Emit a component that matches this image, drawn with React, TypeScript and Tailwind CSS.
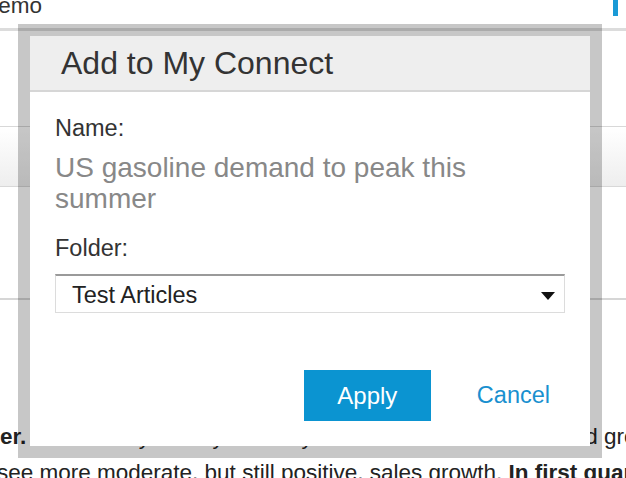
import { useState } from "react"

const folders = ["Test Articles", "Energy", "Markets", "Saved Reports"]

function Caret() {
  return (
    <svg width="14" height="8" viewBox="0 0 14 8" className="shrink-0">
      <path d="M0 0h14L7 8z" fill="#111" />
    </svg>
  )
}

function BackgroundPage() {
  return (
    <div className="flex flex-col text-[22.5px] text-[#222]">
      {/* top bar */}
      <div className="flex h-[28px] items-start justify-between">
        <span className="-ml-[18px] -mt-[8px] leading-[27px] text-[#333]">Demo</span>
        <div className="mr-[8px] h-[16px] w-[5px] bg-[#1a9ad6]" />
      </div>
      <div className="h-[3px] bg-[#dcdcdc]" />
      <div className="h-[95px]" />
      {/* toolbar band */}
      <div className="h-[61px] border-y border-[#d8d8d8] bg-gradient-to-b from-white to-[#eeeeee]" />
      <div className="h-[111px]" />
      <div className="h-[2px] bg-[#d6d6d6]" />
      <div className="h-[119px]" />
      <div className="whitespace-nowrap leading-[36px]">
        <p>
          <b>er.</b> Traders say that by mid July total demand will flatten and gro
        </p>
        <p className="-ml-[3px]">
          see more moderate, but still positive, sales growth. <b>In first quarter</b>
        </p>
      </div>
    </div>
  )
}

export default function App() {
  const [folder, setFolder] = useState(folders[0])

  return (
    <div className="relative h-[478px] w-[626px] overflow-hidden bg-white font-['Liberation_Sans',Arial,sans-serif]">
      <BackgroundPage />

      {/* Add to My Connect dialog */}
      <div className="absolute left-[18px] top-[24px] w-[584px] bg-black/[0.22] p-[12px]">
        <div className="flex flex-col bg-white">
          <div className="flex h-[56px] items-center border-b-2 border-[#d6d6d6] bg-[#eeeeee] pl-[31px]">
            <h2 className="text-[32px] leading-none text-[#333]">Add to My Connect</h2>
          </div>

          <div className="flex flex-col px-[25px] pb-[25px] pt-[22px]">
            <div className="text-[23.5px] leading-[28px] text-[#333]">Name:</div>
            <div className="mt-[10px] text-[28px] leading-[31px] text-[#888]">
              US gasoline demand to peak this summer
            </div>

            <div className="mt-[20px] text-[23.5px] leading-[28px] text-[#333]">Folder:</div>
            <div className="relative mt-[12px] flex h-[39px] items-center border border-t-2 border-[#dcdcdc] border-t-[#9a9a9a] pl-[16px] pr-[9px] pt-[4px]">
              <select
                value={folder}
                onChange={(e) => setFolder(e.target.value)}
                className="absolute inset-0 opacity-0"
              >
                {folders.map((f) => (
                  <option key={f}>{f}</option>
                ))}
              </select>
              <span className="flex-1 text-[23.5px] text-[#222]">{folder}</span>
              <Caret />
            </div>

            <div className="mt-[57px] flex items-center justify-end">
              <button className="h-[51px] w-[127px] bg-[#0b94d1] text-[24px] text-white">Apply</button>
              <button className="ml-[31px] px-[15px] text-[23.5px] text-[#1990cf]">Cancel</button>
            </div>
          </div>
        </div>
      </div>
    </div>
  )
}
